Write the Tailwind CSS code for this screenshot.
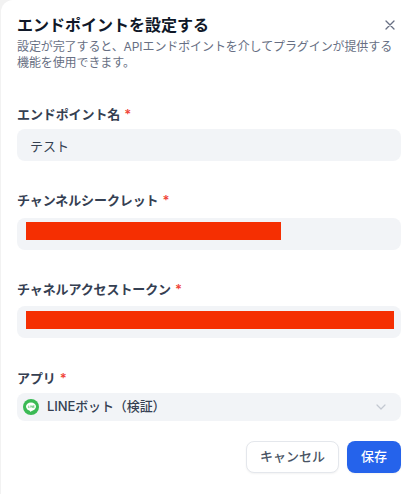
<!DOCTYPE html>
<html lang="ja">
<head>
    <meta charset="UTF-8">
    <title>エンドポイントを設定する</title>
    <script src="https://cdn.jsdelivr.net/npm/@tailwindcss/browser@4"></script>
</head>
<body class="bg-[#f2f2f2] font-['Inter','Noto_Sans_CJK_JP',sans-serif]">
    <div class="ml-[1px] h-[494px] w-[412px] rounded-tl-xl bg-white pl-4 pr-3 pt-[13px]">
        <!-- ヘッダー -->
        <div class="flex h-6 items-center justify-between">
            <h1 class="text-base leading-6 font-semibold text-[#101828]">エンドポイントを設定する</h1>
            <svg class="mr-[3px] h-4 w-4 text-[#676f83]" viewBox="0 0 16 16" fill="none" stroke="currentColor" stroke-width="1.3" stroke-linecap="round">
                <path d="M4 4l8 8M12 4l-8 8"/>
            </svg>
        </div>
        <p class="mt-[2px] w-[384px] text-xs leading-4 tracking-[-0.1px] text-[#676f83]">設定が完了すると、APIエンドポイントを介してプラグインが提供する機能を使用できます。</p>

        <!-- エンドポイント名 -->
        <div class="mt-[39px] w-[384px]">
            <label class="flex h-[9px] items-center gap-1 text-[13px] font-semibold tracking-[-0.1px] text-[#354052]">エンドポイント名 <span class="text-[#f04438]">*</span></label>
            <div class="mt-[10px] flex h-8 items-center rounded-lg bg-[#f2f4f7] px-[13px] pt-[3px] text-[13px] text-[#354052]">テスト</div>
        </div>

        <!-- チャンネルシークレット -->
        <div class="mt-[35px] w-[384px]">
            <label class="flex h-[9px] items-center gap-1 text-[13px] font-semibold tracking-[-0.1px] text-[#354052]">チャンネルシークレット <span class="text-[#f04438]">*</span></label>
            <div class="mt-[13px] h-8 rounded-lg bg-[#f2f4f7] pl-[9px] pt-1">
                <div class="h-[18px] w-[255px] bg-[#f52f02]"></div>
            </div>
        </div>

        <!-- チャネルアクセストークン -->
        <div class="mt-[35px] w-[384px]">
            <label class="flex h-[9px] items-center gap-1 text-[13px] font-semibold tracking-[-0.1px] text-[#354052]">チャネルアクセストークン <span class="text-[#f04438]">*</span></label>
            <div class="mt-[12px] h-8 rounded-lg bg-[#f2f4f7] pl-[9px] pt-[5px]">
                <div class="h-[18px] w-[368px] bg-[#f52f02]"></div>
            </div>
        </div>

        <!-- アプリ -->
        <div class="mt-[36px] w-[384px]">
            <label class="flex h-[9px] items-center gap-1 text-[13px] font-semibold tracking-[-0.1px] text-[#354052]">アプリ <span class="text-[#f04438]">*</span></label>
            <div class="mt-[10px] flex h-7 items-center justify-between rounded-lg bg-[#f2f4f7] pl-[6px] pr-3">
                <div class="flex items-center gap-2 text-[13px] font-medium tracking-[-0.1px] text-[#354052]">
                    <svg class="h-4 w-4" viewBox="0 0 16 16">
                        <circle cx="8" cy="8" r="8" fill="#3bba55"/>
                        <ellipse cx="8" cy="7.6" rx="5" ry="4.2" fill="#fff"/>
                        <path d="M6.5 11l1 2 2.5-2.2z" fill="#fff"/>
                        <path d="M5.4 6.6v2h1M7.2 6.6v2M8.2 8.6v-2l1.3 2v-2M11.4 6.6h-1v2h1M10.4 7.6h1" fill="none" stroke="#3bba55" stroke-width=".55"/>
                    </svg>
                    LINEボット（検証）
                </div>
                <svg class="h-4 w-4 text-[#c3c8d1]" viewBox="0 0 16 16" fill="none" stroke="currentColor" stroke-width="1.2" stroke-linecap="round" stroke-linejoin="round">
                    <path d="M4 6l4 4 4-4"/>
                </svg>
            </div>
        </div>

        <!-- ボタン -->
        <div class="mt-5 flex w-[384px] justify-end gap-2">
            <button class="h-8 w-[93px] rounded-lg border border-[#e4e7ec] bg-white text-[13px] font-medium text-[#495464] shadow-xs">キャンセル</button>
            <button class="h-8 w-[54px] rounded-lg bg-[#2563eb] text-[13px] font-medium text-white shadow-xs">保存</button>
        </div>
    </div>
</body>
</html>
